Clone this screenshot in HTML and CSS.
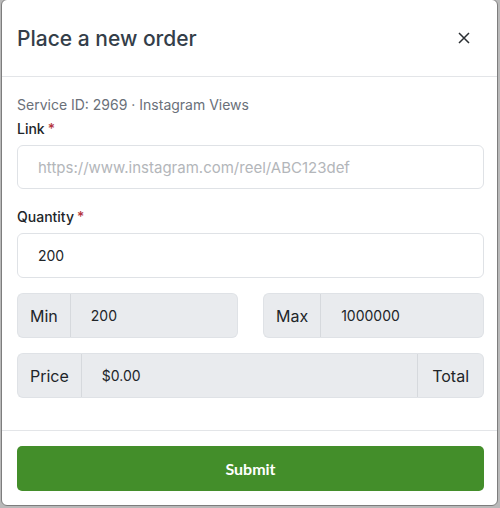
FILE: index.html
```html
<!DOCTYPE html>
<html lang="en">
<head>
  <meta charset="UTF-8">
  <meta name="viewport" content="width=device-width, initial-scale=1.0">
  <title>Place a new order</title>
  <link rel="stylesheet" href="styles.css">
</head>
<body>
  <div class="modal">
    <div class="modal-header">
      <h2 class="modal-title">Place a new order</h2>
      <button class="btn-close" aria-label="Close">
        <svg width="12" height="12" viewBox="0 0 12 12"><path d="M1 1L11 11M11 1L1 11" stroke="#2b2f33" stroke-width="1.5" fill="none"/></svg>
      </button>
    </div>
    <form class="modal-body">
      <p class="service-info">Service ID: 2969 · Instagram Views</p>
      <label class="form-label" for="link">Link<span class="req">*</span></label>
      <input class="form-control" id="link" type="text" placeholder="https://www.instagram.com/reel/ABC123def">
      <label class="form-label quantity-label" for="quantity">Quantity<span class="req">*</span></label>
      <input class="form-control" id="quantity" type="text" value="200">
      <div class="limits">
        <div class="input-group">
          <span class="input-group-text">Min</span>
          <input class="form-control" type="text" value="200" disabled>
        </div>
        <div class="input-group">
          <span class="input-group-text">Max</span>
          <input class="form-control" type="text" value="1000000" disabled>
        </div>
      </div>
      <div class="input-group price-group">
        <span class="input-group-text">Price</span>
        <input class="form-control" type="text" value="$0.00" disabled>
        <span class="input-group-text total">Total</span>
      </div>
    </form>
    <div class="modal-footer">
      <button class="btn-submit" type="submit">Submit</button>
    </div>
  </div>
</body>
</html>
```
FILE: styles.css
```css
body, html {
  padding: 0;
  margin: 0;
}
body {
  background-color: #b9b9b9;
  font-family: 'Inter', 'Open Sans', sans-serif;
  color: #212529;
  height: 508px;
  overflow: hidden;
}
.modal {
  background-color: #fff;
  margin: -1px 2px 0 1px;
  border: 1px solid #7d7d7d;
  border-radius: 6px;
}
.modal-header {
  height: 76px;
  display: flex;
  align-items: center;
  justify-content: space-between;
  padding: 0 26px 0 15px;
  border-bottom: 1px solid #e3e5e8;
}
.modal-title {
  margin: 0;
  font-size: 21px;
  font-weight: 500;
  color: #343e49;
}
.btn-close {
  border: none;
  background: none;
  padding: 0;
  width: 14px;
  height: 14px;
  display: flex;
  align-items: center;
  justify-content: center;
  cursor: pointer;
}
.modal-body {
  padding: 17px 13px 32px 15px;
}
.service-info {
  margin: 0 0 4px;
  font-size: 14px;
  line-height: 22px;
  color: #6a7079;
}
.form-label {
  display: block;
  font-size: 14px;
  font-weight: 500;
  line-height: 17px;
  margin-bottom: 8px;
}
.req {
  color: #b4353d;
  margin-left: 3px;
}
.quantity-label {
  margin-top: 19px;
}
.form-control {
  display: block;
  box-sizing: border-box;
  width: 100%;
  height: 45px;
  padding: 0 20px;
  border: 1px solid #dfe2e6;
  border-radius: 6px;
  font-family: inherit;
  font-size: 14px;
  color: #212529;
  background-color: #fff;
  outline: none;
}
#link {
  height: 44px;
  font-size: 15px;
}
.form-control::placeholder {
  color: #b3b6ba;
}
.limits {
  display: grid;
  grid-template-columns: 1fr 1fr;
  gap: 25px;
  margin: 15px 0;
}
.input-group {
  display: flex;
  height: 45px;
}
.input-group .form-control {
  flex: 1;
  min-width: 0;
  border-radius: 0 6px 6px 0;
  background-color: #e9ebee;
  height: 45px;
}
.input-group-text {
  display: flex;
  align-items: center;
  padding: 0 12px;
  font-size: 16px;
  background-color: #e9ebee;
  border: 1px solid #dfe2e6;
  border-right-color: #d6d9dd;
  border-radius: 6px 0 0 6px;
}
.price-group .form-control {
  border-radius: 0;
  border-left: none;
  border-right: none;
}
.input-group-text.total {
  padding: 0 14px;
  border-radius: 0 6px 6px 0;
  border-right-color: #dfe2e6;
  border-left-color: #d6d9dd;
}
.limits .form-control {
  border-left: none;
}
.modal-footer {
  border-top: 1px solid #e3e5e8;
  padding: 15px 13px 14px 15px;
}
.btn-submit {
  display: block;
  width: 100%;
  height: 45px;
  border: none;
  border-radius: 5px;
  background-color: #438e2a;
  color: #fff;
  font-family: 'Lato', sans-serif;
  font-weight: 700;
  font-size: 16px;
  cursor: pointer;
}
```
